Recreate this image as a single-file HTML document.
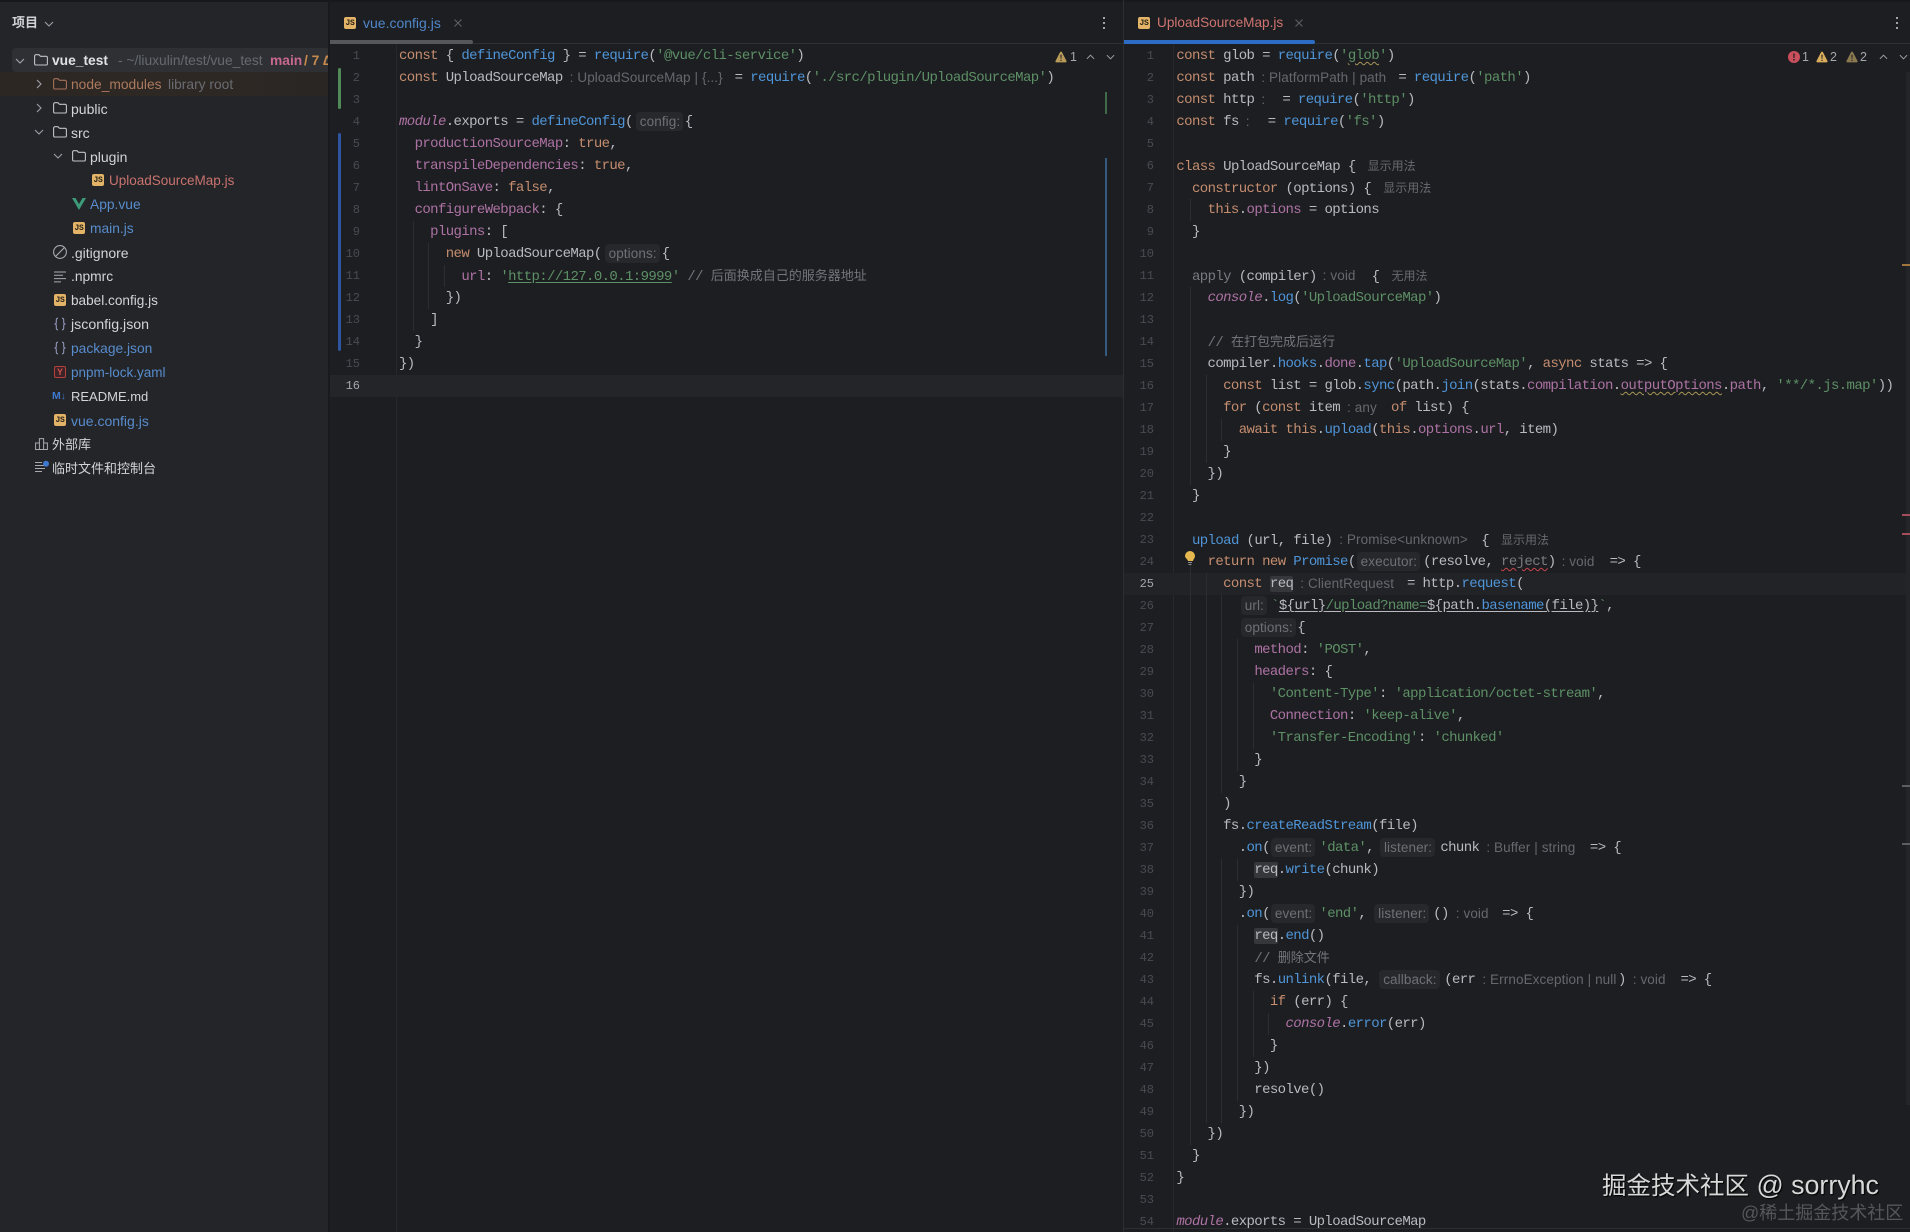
<!DOCTYPE html>
<html lang="zh"><head><meta charset="utf-8"><title>vue_test</title>
<style>
html,body{margin:0;padding:0;background:#1d1e21;width:1910px;height:1232px;overflow:hidden}
body{font-family:"Liberation Sans","Noto Sans CJK SC",sans-serif}
#page{position:relative;width:1910px;height:1232px;overflow:hidden;background:#1d1e21}
.abs,.r,.ic{position:absolute}
#top{left:0;top:0;width:1910px;height:2px;background:#16191c}
#side{left:0;top:2px;width:328px;height:1230px;background:#232528}
#strip{left:328px;top:0;width:2px;height:1232px;background:#191a1d}
.r{height:24px;line-height:24px;font-size:13.8px;color:#d2d4d8;white-space:nowrap}
.bl{color:#588ccd}.sal{color:#c9736f}.or{color:#ad7a5e}.gr{color:#696c72}
.js{position:absolute;width:12px;height:12px;background:#e3b467;border-radius:2px;color:#2a2418;font:bold 8px/13px "Liberation Mono",monospace;text-align:center;letter-spacing:-.3px}
svg{position:absolute;overflow:visible}
.code{position:absolute;margin:0;font:14px/22px "Liberation Mono","Noto Sans CJK SC",monospace;letter-spacing:-.61px;color:#b8bac0}
.code div{height:22px;white-space:pre}
.k{color:#c58d6f}.f{color:#4f95d8}.s{color:#5d9066}.c{color:#72757b}.p{color:#ad72a4}.m{color:#ad72a4;font-style:italic}.d{color:#787a80}
.z{font-size:13px;letter-spacing:0;color:#72757b;font-family:"Liberation Sans","Noto Sans CJK SC",sans-serif}
.h{display:inline-block;position:relative;height:22px;vertical-align:top;font:13.5px/21px "Liberation Sans",sans-serif;letter-spacing:.1px;color:#65686d;white-space:nowrap;font-style:normal}
.h b{font-weight:normal;position:absolute;top:1px;height:19px;line-height:19px;padding:0 3px 0 4px;background:#26282b;border-radius:4px;color:#6d7075}
.h u{text-decoration:none;position:absolute;top:0}
.z2{font:12px/22px "Liberation Sans","Noto Sans CJK SC",sans-serif;letter-spacing:0;color:#66696e;margin-left:12px}
.ul{text-decoration:underline;text-underline-offset:2px}
.wy{text-decoration:underline wavy #a89556 1px;text-underline-offset:2px}
.wr{text-decoration:underline wavy #c7444c 1px;text-underline-offset:2px}
.oc{background:#35373a;border-radius:2px}
.num{position:absolute;margin:0;font:12px/22px "Liberation Mono",monospace;color:#484b52;text-align:right;white-space:pre}
.g{position:absolute;width:1px;background:#2b2d30}
.tx{position:absolute;font-size:12.5px;color:#a5a7ac;line-height:14px}
</style></head><body><div id="page">
<svg width="0" height="0" style="position:absolute"><defs>
<symbol id="fd" viewBox="0 0 14 12"><path d="M.6 2a1.3 1.3 0 0 1 1.3-1.3h3l1.6 1.6h5.6A1.3 1.3 0 0 1 13.4 3.600v6.100a1.300 1.300 0 0 1-1.300 1.300H1.900A1.300 1.300 0 0 1 .6 9.700z" fill="none" stroke="currentColor" stroke-width="1.100"/></symbol>
<symbol id="dn" viewBox="0 0 10 6"><path d="M1 1l4 4 4-4" fill="none" stroke="currentColor" stroke-width="1.100"/></symbol>
<symbol id="rt" viewBox="0 0 6 10"><path d="M1 1l4 4-4 4" fill="none" stroke="currentColor" stroke-width="1.100"/></symbol>
<symbol id="tri" viewBox="0 0 12 12"><path d="M6 .6c.5 0 .8.3 1 .7l4.500 8.700c.3.700-.1 1.400-.9 1.400H1.400c-.8 0-1.200-.7-.9-1.400L5 1.300c.2-.4.500-.7 1-.7z" fill="currentColor"/><path d="M5.400 3.800h1.200l-.2 4h-.8zM5.400 8.700h1.200v1.200H5.400z" fill="#1d1e21"/></symbol>
<symbol id="brace" viewBox="0 0 14 14"><path d="M5 1.200C3.700 1.200 3.300 1.800 3.300 3v2.500C3.300 6.400 2.800 7 1.500 7c1.300 0 1.800.6 1.800 1.500V11c0 1.200.4 1.800 1.700 1.800M9 1.200c1.300 0 1.700.6 1.700 1.800v2.500c0 .9.500 1.500 1.800 1.500-1.300 0-1.800.6-1.800 1.500V11c0 1.200-.4 1.800-1.700 1.800" fill="none" stroke="#8f95b5" stroke-width="1.100"/></symbol>
</defs></svg>

<div class="abs" id="side"></div><div class="abs" id="strip"></div><div class="abs" id="top"></div>

<!-- sidebar -->
<div class="r" style="left:12px;top:11px;font-size:13px;font-weight:bold;color:#d0d2d6">项目</div>
<svg style="left:44px;top:21px;color:#9da0a8" width="10" height="6"><use href="#dn"/></svg>

<div class="abs" style="left:12px;top:48px;width:316px;height:24px;background:#2e3034;border-radius:4px 0 0 4px"></div>
<div class="abs" style="left:0;top:72px;width:328px;height:24px;background:linear-gradient(90deg,#2c2723,#2e2824 70%,#292624)"></div>

<svg style="left:15px;top:58px;color:#a4a7ae" width="10" height="6"><use href="#dn"/></svg>
<svg style="left:34px;top:54px;color:#c0c2c8" width="14" height="12"><use href="#fd"/></svg>
<div class="r" style="left:52px;top:49px;font-weight:bold;color:#dfe1e5">vue_test</div>
<div class="abs" style="left:52px;top:49px;width:276px;height:24px;overflow:hidden;font-size:13.8px;line-height:24px;white-space:nowrap">
<span style="position:absolute;left:66px;color:#666a70">- ~/liuxulin/test/vue_test</span><span style="position:absolute;left:218px;color:#c7688f;font-weight:bold">main</span><span style="position:absolute;left:252px;color:#c68a4e;font-weight:bold">/ 7 ∆</span></div>

<svg style="left:36px;top:79px;color:#9da0a8" width="6" height="10"><use href="#rt"/></svg>
<svg style="left:53px;top:78px;color:#a5715a" width="14" height="12"><use href="#fd"/></svg>
<div class="r or" style="left:71px;top:73px">node_modules</div><div class="r gr" style="left:168px;top:73px">library root</div>

<svg style="left:36px;top:103px;color:#9da0a8" width="6" height="10"><use href="#rt"/></svg>
<svg style="left:53px;top:102px;color:#c0c2c8" width="14" height="12"><use href="#fd"/></svg>
<div class="r" style="left:71px;top:97px;font-size:14px">public</div>

<svg style="left:34px;top:129px;color:#9da0a8" width="10" height="6"><use href="#dn"/></svg>
<svg style="left:53px;top:126px;color:#c0c2c8" width="14" height="12"><use href="#fd"/></svg>
<div class="r" style="left:71px;top:121px;font-size:14px">src</div>

<svg style="left:53px;top:153px;color:#9da0a8" width="10" height="6"><use href="#dn"/></svg>
<svg style="left:72px;top:150px;color:#c0c2c8" width="14" height="12"><use href="#fd"/></svg>
<div class="r" style="left:90px;top:145px;font-size:14px">plugin</div>

<div class="js" style="left:92px;top:174px">JS</div>
<div class="r sal" style="left:109px;top:169px;font-size:13.5px">UploadSourceMap.js</div>

<svg style="left:72px;top:198px" width="14" height="12" viewBox="0 0 14 12"><path d="M0 0h3.500L7 6l3.500-6H14L7 12z" fill="#3d9a78"/></svg>
<div class="r bl" style="left:90px;top:193px">App.vue</div>

<div class="js" style="left:73px;top:222px">JS</div>
<div class="r bl" style="left:90px;top:217px">main.js</div>

<svg style="left:53px;top:245px" width="14" height="14" viewBox="0 0 14 14"><circle cx="7" cy="7" r="6.400" fill="none" stroke="#a8aab0" stroke-width="1.100"/><path d="M2.500 11.500l9-9" stroke="#a8aab0" stroke-width="1.100"/></svg>
<div class="r" style="left:71px;top:241px;font-size:14px">.gitignore</div>

<svg style="left:54px;top:271px" width="12" height="12" viewBox="0 0 12 12"><path d="M0 1h12M0 4.300h9M0 7.600h12M0 10.900h7" stroke="#a8aab0" stroke-width="1"/></svg>
<div class="r" style="left:71px;top:265px">.npmrc</div>

<div class="js" style="left:54px;top:294px">JS</div>
<div class="r" style="left:71px;top:289px;font-size:13.6px">babel.config.js</div>

<svg style="left:53px;top:317px" width="14" height="14"><use href="#brace"/></svg>
<div class="r" style="left:71px;top:313px;font-size:14.2px">jsconfig.json</div>

<svg style="left:53px;top:341px" width="14" height="14"><use href="#brace"/></svg>
<div class="r bl" style="left:71px;top:337px">package.json</div>

<svg style="left:54px;top:366px" width="12" height="12" viewBox="0 0 12 12"><rect x=".5" y=".5" width="11" height="11" rx="1.500" fill="#3a2426" stroke="#b5403f"/></svg>
<div class="abs" style="left:54px;top:366px;width:12px;text-align:center;font:bold 9px/12px 'Liberation Sans',sans-serif;color:#d0504e">Y</div>
<div class="r bl" style="left:71px;top:361px;font-size:13.5px">pnpm-lock.yaml</div>

<div class="abs" style="left:52px;top:390px;font:bold 10.500px/13px 'Liberation Sans',sans-serif;color:#3f78cf;white-space:nowrap">M<span style="font-size:10px">↓</span></div>
<div class="r" style="left:71px;top:385px;font-size:13px">README.md</div>

<div class="js" style="left:54px;top:414px">JS</div>
<div class="r bl" style="left:71px;top:409px;font-size:14px">vue.config.js</div>

<svg style="left:35px;top:438px" width="13" height="12" viewBox="0 0 13 12"><path d="M.6 5h3.800v6.500H.6zM4.400 .6h4.200v10.900H4.400zM8.600 5h3.800v6.500H8.600z" fill="none" stroke="#a8aab0" stroke-width="1"/></svg>
<div class="r" style="left:52px;top:433px;font-size:13px">外部库</div>

<svg style="left:35px;top:461px" width="14" height="13" viewBox="0 0 14 13"><path d="M0 4.500h9M0 7.500h10M0 10.500h7" stroke="#a8aab0" stroke-width="1"/><path d="M0 1.500h7" stroke="#a8aab0" stroke-width="1"/><circle cx="11" cy="2.800" r="3" fill="#3f78cf"/></svg>
<div class="r" style="left:52px;top:457px;font-size:13px">临时文件和控制台</div>

<!-- left editor chrome -->
<div class="abs" style="left:330px;top:43px;width:793px;height:1px;background:#2e3033"></div>
<div class="abs" style="left:330px;top:40px;width:143px;height:4px;background:#55575b;border-radius:0 2px 2px 0"></div>
<div class="js" style="left:344px;top:17px">JS</div>
<div class="r" style="left:363px;top:11px;font-size:14px;color:#4f87c9">vue.config.js</div>
<svg style="left:454px;top:19px" width="8" height="8" viewBox="0 0 8 8"><path d="M.5.5l7 7M7.500.5l-7 7" stroke="#5f6167"/></svg>
<div class="abs" style="left:1103px;top:17px;width:2px;height:2px;background:#a0a2a8;box-shadow:0 5px #a0a2a8,0 10px #a0a2a8"></div>
<div class="abs" style="left:1123px;top:0;width:1px;height:1232px;background:#2c2e31"></div>

<div class="abs" style="left:396px;top:44px;width:1px;height:1188px;background:#26282b"></div>
<div class="abs" style="left:338px;top:68px;width:3px;height:41px;background:#4f8a58;border-radius:2px"></div>
<div class="abs" style="left:338px;top:133px;width:3px;height:218px;background:#2f55a0;border-radius:2px"></div>
<div class="abs" style="left:1105px;top:92px;width:2px;height:22px;background:#3f6b4a"></div>
<div class="abs" style="left:1105px;top:158px;width:2px;height:198px;background:#36597f"></div>
<div class="abs" style="left:330px;top:375px;width:793px;height:22px;background:#232528"></div>

<div class="g" style="left:413px;top:221px;height:110px"></div>
<div class="g" style="left:428px;top:243px;height:66px"></div>
<div class="g" style="left:444px;top:265px;height:22px"></div>

<svg style="left:1055px;top:51px;color:#b99a58" width="12" height="12"><use href="#tri"/></svg>
<div class="tx" style="left:1070px;top:50px">1</div>
<svg style="left:1086px;top:54px;color:#a0a2a8;transform:rotate(180deg)" width="9" height="6"><use href="#dn"/></svg>
<svg style="left:1106px;top:54px;color:#a0a2a8" width="9" height="6"><use href="#dn"/></svg>

<pre class="num" style="left:330px;top:45px;width:30px">1
2
3
4
5
6
7
8
9
10
11
12
13
14
15
<span style="color:#a4a6ac">16</span></pre>

<div class="code" style="left:399px;top:45px"><div><span class="k">const</span> { <span class="f">defineConfig</span> } = <span class="f">require</span>(<span class="s">'@vue/cli-service'</span>)</div>
<div><span class="k">const</span> UploadSourceMap<i class="h" style="width:172px"><u style="left:7px">: UploadSourceMap | {...}</u></i>= <span class="f">require</span>(<span class="s">'./src/plugin/UploadSourceMap'</span>)</div>
<div>&nbsp;</div>
<div><span class="m">module</span>.exports = <span class="f">defineConfig</span>(<i class="h" style="width:52px"><b style="left:3px">config:</b></i>{</div>
<div>  <span class="p">productionSourceMap</span>: <span class="k">true</span>,</div>
<div>  <span class="p">transpileDependencies</span>: <span class="k">true</span>,</div>
<div>  <span class="p">lintOnSave</span>: <span class="k">false</span>,</div>
<div>  <span class="p">configureWebpack</span>: {</div>
<div>    <span class="p">plugins</span>: [</div>
<div>      <span class="k">new</span> UploadSourceMap(<i class="h" style="width:60px"><b style="left:3px">options:</b></i>{</div>
<div>        <span class="p">url</span>: <span class="s">'<span class="ul">http://127.0.0.1:9999</span>'</span> <span class="c">// </span><span class="z">后面换成自己的服务器地址</span></div>
<div>      })</div>
<div>    ]</div>
<div>  }</div>
<div>})</div>
<div>&nbsp;</div></div>

<!-- right editor chrome -->
<div class="abs" style="left:1124px;top:43px;width:786px;height:1px;background:#2e3033"></div>
<div class="abs" style="left:1124px;top:40px;width:191px;height:4px;background:#2c6cc4;border-radius:0 2px 2px 0"></div>
<div class="js" style="left:1138px;top:17px">JS</div>
<div class="r" style="left:1157px;top:11px;font-size:13.600px;color:#cf7470">UploadSourceMap.js</div>
<svg style="left:1295px;top:19px" width="8" height="8" viewBox="0 0 8 8"><path d="M.5.5l7 7M7.500.5l-7 7" stroke="#5f6167"/></svg>
<div class="abs" style="left:1896px;top:17px;width:2px;height:2px;background:#a0a2a8;box-shadow:0 5px #a0a2a8,0 10px #a0a2a8"></div>
<div class="abs" style="left:1173px;top:44px;width:1px;height:1188px;background:#26282b"></div>
<div class="abs" style="left:1124px;top:573px;width:786px;height:22px;background:#212326"></div>
<div class="abs" style="left:1906px;top:72px;width:4px;height:1033px;background:#232528"></div>
<div class="abs" style="left:1902px;top:264px;width:8px;height:2px;background:#a0763e"></div>
<div class="abs" style="left:1902px;top:514px;width:8px;height:2px;background:#a64d5c"></div>
<div class="abs" style="left:1902px;top:533px;width:8px;height:2px;background:#a64d5c"></div>
<div class="abs" style="left:1902px;top:785px;width:8px;height:2px;background:#5c5e62"></div>
<div class="abs" style="left:1902px;top:843px;width:8px;height:2px;background:#5c5e62"></div>
<div class="abs" style="left:1124px;top:1228px;width:786px;height:1px;background:#2c2e31"></div>

<!-- guides right -->
<div class="g" style="left:1190px;top:199px;height:22px"></div>
<div class="g" style="left:1190px;top:287px;height:198px"></div>
<div class="g" style="left:1190px;top:551px;height:594px"></div>
<div class="g" style="left:1206px;top:375px;height:88px"></div>
<div class="g" style="left:1206px;top:573px;height:550px"></div>
<div class="g" style="left:1221px;top:419px;height:22px"></div>
<div class="g" style="left:1221px;top:595px;height:198px"></div>
<div class="g" style="left:1221px;top:859px;height:264px"></div>
<div class="g" style="left:1237px;top:639px;height:132px"></div>
<div class="g" style="left:1237px;top:859px;height:22px"></div>
<div class="g" style="left:1237px;top:925px;height:176px"></div>
<div class="g" style="left:1253px;top:683px;height:66px"></div>
<div class="g" style="left:1253px;top:991px;height:66px"></div>
<div class="g" style="left:1268px;top:1013px;height:22px"></div>

<svg style="left:1788px;top:51px" width="12" height="12" viewBox="0 0 12 12"><circle cx="6" cy="6" r="6" fill="#c94f5c"/><path d="M5.300 2.500h1.400l-.2 4.500h-1zM5.300 8h1.400v1.500H5.300z" fill="#1d1e21"/></svg>
<div class="tx" style="left:1802px;top:50px">1</div>
<svg style="left:1816px;top:51px;color:#d8ad5c" width="12" height="12"><use href="#tri"/></svg>
<div class="tx" style="left:1830px;top:50px">2</div>
<svg style="left:1846px;top:51px;color:#8b7a50" width="12" height="12"><use href="#tri"/></svg>
<div class="tx" style="left:1860px;top:50px">2</div>
<svg style="left:1879px;top:54px;color:#a0a2a8;transform:rotate(180deg)" width="9" height="6"><use href="#dn"/></svg>
<svg style="left:1899px;top:54px;color:#a0a2a8" width="9" height="6"><use href="#dn"/></svg>

<svg style="left:1185px;top:551px" width="10" height="15" viewBox="0 0 10 15"><path d="M5 0a5 5 0 0 1 5 5c0 2-1.500 3-2 5H3C2.500 8 0 7 0 5a5 5 0 0 1 5-5z" fill="#e5b84f"/><path d="M3 11.500h4M3.500 13.500h3" stroke="#8a8c90" stroke-width="1"/></svg>

<pre class="num" style="left:1124px;top:45px;width:30px">1
2
3
4
5
6
7
8
9
10
11
12
13
14
15
16
17
18
19
20
21
22
23
24
<span style="color:#a4a6ac">25</span>
26
27
28
29
30
31
32
33
34
35
36
37
38
39
40
41
42
43
44
45
46
47
48
49
50
51
52
53
54</pre>

<div class="code" style="left:1176.400px;top:45px"><div><span class="k">const</span> glob = <span class="f">require</span>(<span class="s">'<span class="wy">glob</span>'</span>)</div>
<div><span class="k">const</span> path<i class="h" style="width:144px"><u style="left:7px">: PlatformPath | path</u></i>= <span class="f">require</span>(<span class="s">'path'</span>)</div>
<div><span class="k">const</span> http<i class="h" style="width:28px"><u style="left:7px">:</u></i>= <span class="f">require</span>(<span class="s">'http'</span>)</div>
<div><span class="k">const</span> fs<i class="h" style="width:29px"><u style="left:7px">:</u></i>= <span class="f">require</span>(<span class="s">'fs'</span>)</div>
<div>&nbsp;</div>
<div><span class="k">class</span> UploadSourceMap {<span class="z2">显示用法</span></div>
<div>  <span class="k">constructor</span> (options) {<span class="z2">显示用法</span></div>
<div>    <span class="k">this</span>.<span class="p">options</span> = options</div>
<div>  }</div>
<div>&nbsp;</div>
<div>  <span class="d">apply</span> (compiler)<i class="h" style="width:55px"><u style="left:6px">: void</u></i>{<span class="z2">无用法</span></div>
<div>    <span class="m">console</span>.<span class="f">log</span>(<span class="s">'UploadSourceMap'</span>)</div>
<div>&nbsp;</div>
<div>    <span class="c">// </span><span class="z">在打包完成后运行</span></div>
<div>    compiler.<span class="f">hooks</span>.<span class="p">done</span>.<span class="f">tap</span>(<span class="s">'UploadSourceMap'</span>, <span class="k">async</span> stats =&gt; {</div>
<div>      <span class="k">const</span> list = glob.<span class="f">sync</span>(path.<span class="f">join</span>(stats.<span class="p">compilation</span>.<span class="p wy">outputOptions</span>.<span class="p">path</span>, <span class="s">'**/*.js.map'</span>))</div>
<div>      <span class="k">for</span> (<span class="k">const</span> item<i class="h" style="width:51px"><u style="left:7px">: any</u></i><span class="k">of</span> list) {</div>
<div>        <span class="k">await</span> <span class="k">this</span>.<span class="f">upload</span>(<span class="k">this</span>.<span class="p">options</span>.<span class="p">url</span>, item)</div>
<div>      }</div>
<div>    })</div>
<div>  }</div>
<div>&nbsp;</div>
<div>  <span class="f">upload</span> (url, file)<i class="h" style="width:149px"><u style="left:7px">: Promise&lt;unknown&gt;</u></i>{<span class="z2">显示用法</span></div>
<div>    <span class="k">return</span> <span class="k">new</span> <span class="f">Promise</span>(<i class="h" style="width:67.500px"><b style="left:1px">executor:</b></i>(resolve, <span class="d wr">reject</span>)<i class="h" style="width:54px"><u style="left:6px">: void</u></i>=&gt; {</div>
<div>      <span class="k">const</span> <span class="oc">req</span><i class="h" style="width:113.700px"><u style="left:7px">: ClientRequest</u></i>= http.<span class="f">request</span>(</div>
<div>        <i class="h" style="width:32.300px"><b style="left:2px">url:</b></i><span class="s">`</span><span class="ul">${<span style="color:#b8bac0">url</span>}<span class="s">/upload?name=</span>${<span style="color:#b8bac0">path</span>.<span class="f">basename</span>(file)}</span><span class="s">`</span>,</div>
<div>        <i class="h" style="width:58.500px"><b style="left:2px">options:</b></i>{</div>
<div>          <span class="p">method</span>: <span class="s">'POST'</span>,</div>
<div>          <span class="p">headers</span>: {</div>
<div>            <span class="s">'Content-Type'</span>: <span class="s">'application/octet-stream'</span>,</div>
<div>            <span class="p">Connection</span>: <span class="s">'keep-alive'</span>,</div>
<div>            <span class="s">'Transfer-Encoding'</span>: <span class="s">'chunked'</span></div>
<div>          }</div>
<div>        }</div>
<div>      )</div>
<div>      fs.<span class="f">createReadStream</span>(file)</div>
<div>        .<span class="f">on</span>(<i class="h" style="width:49.500px"><b style="left:1px">event:</b></i><span class="s">'data'</span>,<i class="h" style="width:66.400px"><b style="left:6px">listener:</b></i>chunk<i class="h" style="width:110.600px"><u style="left:7px">: Buffer | string</u></i>=&gt; {</div>
<div>          <span class="oc">req</span>.<span class="f">write</span>(chunk)</div>
<div>        })</div>
<div>        .<span class="f">on</span>(<i class="h" style="width:49.500px"><b style="left:1px">event:</b></i><span class="s">'end'</span>,<i class="h" style="width:67px"><b style="left:8px">listener:</b></i>()<i class="h" style="width:53.400px"><u style="left:7px">: void</u></i>=&gt; {</div>
<div>          <span class="oc">req</span>.<span class="f">end</span>()</div>
<div>          <span class="c">// </span><span class="z">删除文件</span></div>
<div>          fs.<span class="f">unlink</span>(file,<i class="h" style="width:73px"><b style="left:8px">callback:</b></i>(err<i class="h" style="width:142.600px"><u style="left:7px">: ErrnoException | null</u></i>)<i class="h" style="width:54.700px"><u style="left:7px">: void</u></i>=&gt; {</div>
<div>            <span class="k">if</span> (err) {</div>
<div>              <span class="m">console</span>.<span class="f">error</span>(err)</div>
<div>            }</div>
<div>          })</div>
<div>          resolve()</div>
<div>        })</div>
<div>    })</div>
<div>  }</div>
<div>}</div>
<div>&nbsp;</div>
<div><span class="m">module</span>.exports = UploadSourceMap</div></div>

<div class="abs" style="left:1602px;top:1168px;font-size:24.500px;line-height:34px;color:#d8d8d8;white-space:nowrap;text-shadow:1px 1px 1px #000">掘金技术社区<span style="font-size:26.800px"> @ sorryhc</span></div>
<div class="abs" style="left:1741px;top:1200px;font-size:18px;line-height:26px;color:#55575a;white-space:nowrap">@稀土掘金技术社区</div>
</div></body></html>
